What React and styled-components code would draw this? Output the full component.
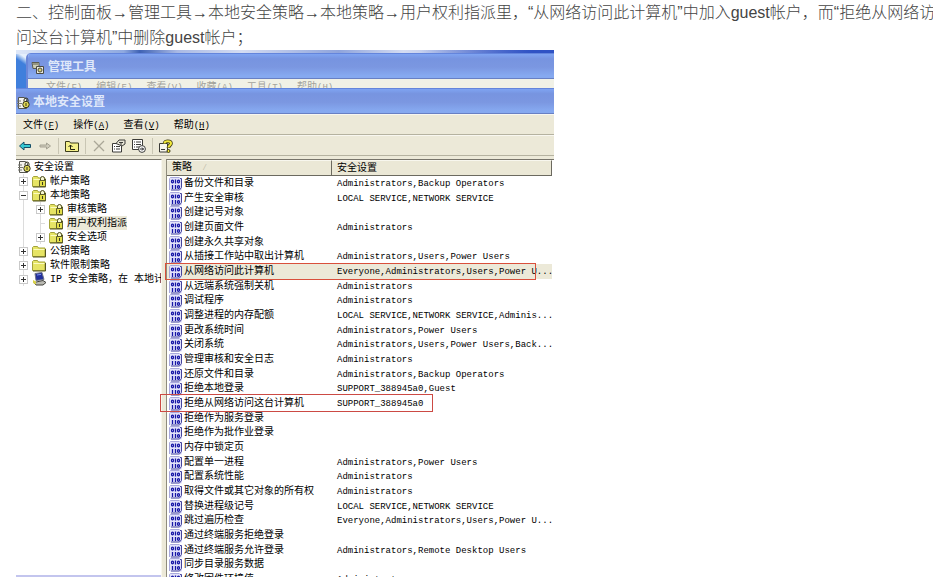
import React from "react";
import styled, { createGlobalStyle } from "styled-components";

const GlobalStyle = createGlobalStyle`
  * {
    box-sizing: border-box;
  }

  body {
    margin: 0;
    background: #ffffff;
    overflow: hidden;
  }
`;

const Page = styled.main`
  height: 100vh;
  padding-left: 16px;
  display: flex;
  flex-direction: column;
`;

const Intro = styled.p`
  margin: 0 -4px 0 0;
  font-family: "Liberation Sans", "Noto Sans CJK SC", sans-serif;
  font-size: 16px;
  font-weight: 300;
  line-height: 25px;
  color: #444444;
`;

const Desktop = styled.section`
  flex: 1;
  min-height: 0;
  width: 100%;
  max-width: 538px;
  display: flex;
  flex-direction: column;
  font-family: "Liberation Mono", "Noto Sans CJK SC", monospace;
  font-size: 10px;
  color: #000000;
  background:
    linear-gradient(90deg, transparent 75%, #2f52c4 96%) 0 0 / 100% 4px no-repeat,
    linear-gradient(90deg, #dfe8f8, #8fa9e0 20%, #3f62b4 23%, #a9b9e4 30%, #d4dcf2 42%, #8fa4dc 60%, #d4dcf2 72%, #6d86d6) 0 0 / 100% 4px no-repeat,
    linear-gradient(35deg, #3f7fdc 60%, #e6f0fc 75%) 0 0 / 16px 38px no-repeat;
`;

const BackWindow = styled.div`
  margin: 3px 0 0 10px;
  border-left: 2px solid #6a86d8;
  border-radius: 5px 0 0 0;
  overflow: hidden;
  flex-shrink: 0;
`;

const TitleBar = styled.header`
  height: 26px;
  flex-shrink: 0;
  display: flex;
  align-items: center;
  gap: 3px;
  padding: 3px 0 0 ${(props) => (props.$back ? "3px" : "1px")};
  border-top: 1px solid #6485dc;
  border-bottom: 1px solid #6880c4;
  background: linear-gradient(#7fa4f2, #7794e0 20%, #7b97e1 55%, #86a9f0 90%);
`;

const Title = styled.h2`
  margin: 0;
  font-size: 12px;
  font-weight: 700;
  line-height: 20px;
  color: #dfe8fa;
`;

const BackMenu = styled.div`
  height: 9px;
  padding-left: 18px;
  display: flex;
  gap: 14px;
  overflow: hidden;
  line-height: 18px;
  color: #a3a39c;
  background: #f1f1e6;
`;

const FrontWindow = styled.div`
  flex: 1;
  min-height: 0;
  display: flex;
  flex-direction: column;
  background: #ece9d8;
`;

const MenuBar = styled.nav`
  height: 21px;
  flex-shrink: 0;
  display: flex;
  align-items: center;
  gap: 14px;
  padding: 2px 0 0 7px;
  border-top: 1px solid #f8f7f0;
  border-bottom: 1px solid #b5b2a0;
`;

const MenuButton = styled.button`
  padding: 0;
  border: 0;
  background: none;
  font: inherit;
  line-height: 14px;
  color: inherit;
`;

const Latin = styled.span`
  font-size: 9px;
`;

const ToolBar = styled.div`
  height: 21px;
  flex-shrink: 0;
  display: flex;
  align-items: center;
  gap: 6px;
  padding-left: 2px;
  border-top: 1px solid #f8f7f0;
  border-bottom: 1px solid #b5b2a0;
`;

const ToolButton = styled.button`
  width: 14px;
  height: 14px;
  padding: 0;
  border: 0;
  background: none;

  svg {
    display: block;
  }
`;

const Separator = styled.span`
  width: 1px;
  height: 16px;
  background: #c9c6b4;
`;

const Panes = styled.div`
  flex: 1;
  min-height: 0;
  display: flex;
  gap: 4px;
  padding-top: 3px;
`;

const TreePane = styled.aside`
  width: 146px;
  flex-shrink: 0;
  display: flex;
  flex-direction: column;
  overflow: hidden;
  border-top: 1px solid #77746a;
  border-right: 1px solid #f8f7ee;
  background: #ffffff;
`;

const TreeList = styled.ul`
  margin: 0;
  padding: 0;
  list-style: none;
  background: linear-gradient(#dcdcdc, #dcdcdc) ${(props) => props.$line}px 0 / 1px 100% no-repeat;
`;

const TreeRow = styled.div`
  height: 14px;
  display: flex;
  align-items: center;
  padding-left: ${(props) => props.$indent}px;
  line-height: 14px;
  white-space: nowrap;

  svg {
    flex-shrink: 0;
    margin-right: 3px;
  }
`;

const TreeLabel = styled.span`
  padding-top: 2px;
  line-height: 12px;
  background: ${(props) => (props.$selected ? "#ece9d8" : "none")};
`;

const Toggle = styled.button`
  width: 9px;
  height: 9px;
  margin-right: 4px;
  padding: 0;
  flex-shrink: 0;
  border: 1px solid #c9c9c9;
  background:
    linear-gradient(#333333, #333333) center / 5px 1px no-repeat,
    linear-gradient(#333333, #333333) center / 1px ${(props) => (props.$open ? "0" : "5px")} no-repeat,
    #ffffff;
`;

const ToggleSpace = styled.span`
  width: 9px;
  height: 1px;
  margin-right: 4px;
  flex-shrink: 0;
  background: linear-gradient(#dcdcdc, #dcdcdc) right / 5px 1px no-repeat;
`;

const PaneFooter = styled.div`
  height: 2px;
  margin-top: auto;
  background: #c3c5ee;
`;

const ListPane = styled.div`
  flex: 1;
  min-width: 0;
  border-top: 1px solid #77746a;
  border-left: 1px solid #8f8c7c;
  background: #ffffff;
`;

const Table = styled.table`
  width: calc(100% - 2px);
  table-layout: fixed;
  border-spacing: 0;
`;

const HeadCell = styled.th`
  width: ${(props) => props.$width || "auto"};
  height: 15px;
  padding: 0 0 0 5px;
  border-top: 1px solid #f8f7ee;
  border-right: 1px solid #6b695f;
  border-bottom: 1px solid #6b695f;
  background: #ebe8d6;
  font-weight: 400;
  line-height: 13px;
  text-align: left;
`;

const SortMark = styled.span`
  margin-left: 10px;
  font-size: 9px;
  color: #b5b2a0;
`;

const Row = styled.tr`
  position: relative;
  height: 15px;
  background: ${(props) => (props.$selected ? "#ece9d8" : "none")};

  &:nth-child(3n) {
    height: 14px;
  }
`;

const Cell = styled.td`
  padding: 0 0 0 ${(props) => (props.$setting ? "5px" : "2px")};
  font-size: ${(props) => (props.$setting ? "9px" : "10px")};
  line-height: 14px;
  white-space: nowrap;
`;

const Policy = styled.div`
  height: 14px;
  display: flex;
  align-items: center;
  gap: 1px;
`;

const Mark = styled.span`
  position: absolute;
  z-index: 1;
  top: ${(props) => (props.$wide ? "-1px" : "-2px")};
  bottom: -1px;
  left: ${(props) => (props.$wide ? "-2px" : "-7px")};
  width: ${(props) => (props.$wide ? "371px" : "273px")};
  border: 1px solid ${(props) => (props.$wide ? "#d9503c" : "#cc4a44")};
`;

const menus = [
  ["文件", "F"],
  ["操作", "A"],
  ["查看", "V"],
  ["帮助", "H"],
];

const backMenus = ["文件(F)", "编辑(E)", "查看(V)", "收藏(A)", "工具(T)", "帮助(H)"];

const policies = [
  ["备份文件和目录", "Administrators,Backup Operators"],
  ["产生安全审核", "LOCAL SERVICE,NETWORK SERVICE"],
  ["创建记号对象", ""],
  ["创建页面文件", "Administrators"],
  ["创建永久共享对象", ""],
  ["从插接工作站中取出计算机", "Administrators,Users,Power Users"],
  ["从网络访问此计算机", "Everyone,Administrators,Users,Power U...", "wide"],
  ["从远端系统强制关机", "Administrators"],
  ["调试程序", "Administrators"],
  ["调整进程的内存配额", "LOCAL SERVICE,NETWORK SERVICE,Adminis..."],
  ["更改系统时间", "Administrators,Power Users"],
  ["关闭系统", "Administrators,Users,Power Users,Back..."],
  ["管理审核和安全日志", "Administrators"],
  ["还原文件和目录", "Administrators,Backup Operators"],
  ["拒绝本地登录", "SUPPORT_388945a0,Guest"],
  ["拒绝从网络访问这台计算机", "SUPPORT_388945a0", "short"],
  ["拒绝作为服务登录", ""],
  ["拒绝作为批作业登录", ""],
  ["内存中锁定页", ""],
  ["配置单一进程", "Administrators,Power Users"],
  ["配置系统性能", "Administrators"],
  ["取得文件或其它对象的所有权", "Administrators"],
  ["替换进程级记号", "LOCAL SERVICE,NETWORK SERVICE"],
  ["跳过遍历检查", "Everyone,Administrators,Users,Power U..."],
  ["通过终端服务拒绝登录", ""],
  ["通过终端服务允许登录", "Administrators,Remote Desktop Users"],
  ["同步目录服务数据", ""],
  ["修改固件环境值", "Administrators"],
];

const tree = [
  { label: "帐户策略", icon: "locked" },
  {
    label: "本地策略",
    icon: "locked",
    children: [
      { label: "审核策略", icon: "locked" },
      { label: "用户权利指派", icon: "locked", selected: true },
      { label: "安全选项", icon: "locked" },
    ],
  },
  { label: "公钥策略", icon: "folder" },
  { label: "软件限制策略", icon: "folder" },
  { label: "IP 安全策略，在 本地计", icon: "computer" },
];

const PolicyIcon = () => (
  <svg width="14" height="14" viewBox="0 0 14 14" fill="none" aria-hidden="true">
    <path d="M1 .5h10l2 2v11H1z" fill="#e2e2fa" />
    <path d="M.5 13V1.500l1-1h9" stroke="#a9a9dc" />
    <path d="M11 1.500h1.500v9l-2 2.500H2" stroke="#44449c" />
    <g stroke="#1616a6" strokeWidth="1.300">
      <ellipse cx="3.500" cy="4.500" rx="1" ry="1.400" />
      <path d="M6.500 2.500v4M3.500 8v4M6.500 8v4" />
      <ellipse cx="9.500" cy="4.500" rx="1" ry="1.400" />
      <ellipse cx="9.500" cy="10" rx="1" ry="1.400" />
    </g>
  </svg>
);

const FolderIcon = ({ locked }) => (
  <svg width="15" height="13" viewBox="0 0 15 13" fill="none" aria-hidden="true">
    <path d="M.5 11.500v-9l1-1h4l1 1.500h6.500v8.500z" fill="#e6e465" stroke="#a3a33a" />
    <path d="M1.500 4.500h11" stroke="#fbfbc0" />
    <path d="M1 12h12.500V4" stroke="#55551f" />
    {locked && (
      <g>
        <path d="M8.500 6V3.500a2 2 0 0 1 4 0V6" fill="#f6f6d0" stroke="#4b4b20" />
        <path d="M7.500 5.500h6v6h-6z" fill="#e3df4a" stroke="#5f5f2a" />
        <path d="M10.500 7v3" stroke="#3a3a1c" />
      </g>
    )}
  </svg>
);

const SecurityIcon = () => (
  <svg width="13" height="14" viewBox="0 0 13 14" fill="none" aria-hidden="true">
    <path d="M1.500 1.500h6l2 2v9h-8z" fill="#f4f4ee" stroke="#55554f" />
    <path d="M0 5h4M0 7.500h5M0 10h4" stroke="#77776f" />
    <path d="M7 5.500V4a2 2 0 0 1 4 0v1.500" stroke="#33331c" />
    <circle cx="9" cy="8.500" r="3.200" fill="#e2dc55" stroke="#33331c" />
    <path d="M9 7v3" stroke="#33331c" />
  </svg>
);

const ComputerIcon = () => (
  <svg width="15" height="14" viewBox="0 0 15 14" fill="none" aria-hidden="true">
    <path d="M3 1.500 10 .5l2 7-8 1z" fill="#23309c" stroke="#6f7488" />
    <path d="M5 3l4-.6" stroke="#7f94ec" />
    <path d="M2 10.500 11 8.500l3 2-3 2.500H4z" fill="#b9b9b2" stroke="#44443f" />
    <path d="M1 8l3 1.500v3L1 11z" fill="#d9d24a" />
  </svg>
);

const ToolsIcon = () => (
  <svg width="14" height="14" viewBox="0 0 14 14" fill="none" aria-hidden="true">
    <path d="M1 1.500h7v6H2z" fill="#cfcfb4" stroke="#5c5c50" />
    <path d="M2 3h5" stroke="#5c5c50" />
    <path d="M5.500 5.500h7v7h-7z" fill="#e9e9dc" stroke="#4a4a44" />
    <circle cx="9" cy="9" r="2" fill="#d8d16a" stroke="#4a4a44" />
  </svg>
);

const toolIcons = {
  back: <path d="M1.500 7 6 3v2.500h6.500v3H6V11z" fill="#35c8d2" stroke="#154c66" />,
  forward: <path d="M12.500 7 8.500 4v2H2v2h6.500v2z" fill="#cfccbc" stroke="#a5a293" />,
  up: (
    <g>
      <path d="M.5 12.500v-10h4l1 1.500h8v8.500z" fill="#f5f08a" stroke="#3d3d1c" />
      <path d="M5.500 6v4.500H10M3.500 8l2-2 2 2" stroke="#222211" />
    </g>
  ),
  remove: <path d="M2 2l10 10M12 2 2 12" stroke="#aaa798" strokeWidth="1.300" />,
  properties: (
    <g>
      <path d="M.5 4.500h9v8.500h-9z" fill="#ffffff" stroke="#3b3b38" />
      <path d="M2 7.500h1M4 7.500h4M2 10h1M4 10h4" stroke="#3b3b38" />
      <path d="M4 4.500 7 1h6v4l-3 2z" fill="#e8e6d8" stroke="#3b3b38" />
      <path d="M7 3.500h4M8 5h2" stroke="#3b3b38" />
    </g>
  ),
  exportList: (
    <g>
      <path d="M.5 .5h10v10H.5z" fill="#ffffff" stroke="#3b3b38" />
      <path d="M2 3h1M4 3h5M2 5.500h1M4 5.500h5M2 8h1M4 8h3" stroke="#3b3b38" />
      <circle cx="10" cy="10" r="3.400" fill="#ffffff" stroke="#3b3b38" />
      <path d="M8 10h3.500M10 8.500l1.500 1.500-1.500 1.500" stroke="#222222" />
    </g>
  ),
  help: (
    <g>
      <path d="M.5 4.500h8V13h-8z" fill="#f7f6ec" stroke="#3b3b38" />
      <path d="M2 10.500h4" stroke="#3b3b38" />
      <path d="M5.500 4.500C5.500 1.500 12 1.500 12 4.500 12 6 9.500 6.500 9.500 9" stroke="#3d3a12" strokeWidth="3.600" />
      <path d="M5.500 4.500C5.500 1.500 12 1.500 12 4.500 12 6 9.500 6.500 9.500 8.500" stroke="#f2e93a" strokeWidth="2" />
      <circle cx="9.500" cy="12" r="1.500" fill="#f2e93a" stroke="#3d3a12" />
    </g>
  ),
};

const Tool = ({ name, label }) => (
  <ToolButton type="button" aria-label={label}>
    <svg width="14" height="14" viewBox="0 0 14 14" fill="none">
      {toolIcons[name]}
    </svg>
  </ToolButton>
);

function nodeIcon(icon) {
  if (icon === "computer") {
    return <ComputerIcon />;
  }
  return <FolderIcon locked={icon === "locked"} />;
}

const Tree = ({ nodes, indent }) => (
  <TreeList $line={indent + 4}>
    {nodes.map((node) => (
      <li key={node.label}>
        <TreeRow $indent={indent}>
          {node.selected ? (
            <ToggleSpace />
          ) : (
            <Toggle type="button" $open={!!node.children} aria-label={node.label} />
          )}
          {nodeIcon(node.icon)}
          <TreeLabel $selected={node.selected}>{node.label}</TreeLabel>
        </TreeRow>
        {node.children && <Tree nodes={node.children} indent={indent + 17} />}
      </li>
    ))}
  </TreeList>
);

export default () => {
  return (
    <Page>
      <GlobalStyle />
      <Intro>
        二、控制面板→管理工具→本地安全策略→本地策略→用户权利指派里，“从网络访问此计算机”中加入guest帐户，而“拒绝从网络访问这台计算机”中删除guest帐户；
      </Intro>
      <Desktop>
        <BackWindow>
          <TitleBar $back>
            <ToolsIcon />
            <Title>管理工具</Title>
          </TitleBar>
          <BackMenu>
            {backMenus.map((item) => (
              <span key={item}>
                {item.slice(0, 2)}
                <Latin>{item.slice(2)}</Latin>
              </span>
            ))}
          </BackMenu>
        </BackWindow>
        <FrontWindow>
          <TitleBar>
            <SecurityIcon />
            <Title>本地安全设置</Title>
          </TitleBar>
          <MenuBar>
            {menus.map(([name, letter]) => (
              <MenuButton type="button" key={name}>
                {name}
                <Latin>
                  (<u>{letter}</u>)
                </Latin>
              </MenuButton>
            ))}
          </MenuBar>
          <ToolBar>
            <Tool name="back" label="后退" />
            <Tool name="forward" label="前进" />
            <Separator />
            <Tool name="up" label="向上" />
            <Separator />
            <Tool name="remove" label="删除" />
            <Tool name="properties" label="属性" />
            <Tool name="exportList" label="导出列表" />
            <Separator />
            <Tool name="help" label="帮助" />
          </ToolBar>
          <Panes>
            <TreePane>
              <TreeRow $indent={2}>
                <SecurityIcon />
                <TreeLabel>安全设置</TreeLabel>
              </TreeRow>
              <Tree nodes={tree} indent={3} />
              <PaneFooter />
            </TreePane>
            <ListPane>
              <Table>
                <thead>
                  <tr>
                    <HeadCell $width="165px">
                      策略<SortMark>∕</SortMark>
                    </HeadCell>
                    <HeadCell>安全设置</HeadCell>
                  </tr>
                </thead>
                <tbody>
                  {policies.map(([name, setting, mark]) => (
                    <Row key={name} $selected={mark === "wide"}>
                      <Cell>
                        <Policy>
                          <PolicyIcon />
                          {name}
                        </Policy>
                        {mark && <Mark $wide={mark === "wide"} />}
                      </Cell>
                      <Cell $setting>{setting}</Cell>
                    </Row>
                  ))}
                </tbody>
              </Table>
            </ListPane>
          </Panes>
        </FrontWindow>
      </Desktop>
    </Page>
  );
};
